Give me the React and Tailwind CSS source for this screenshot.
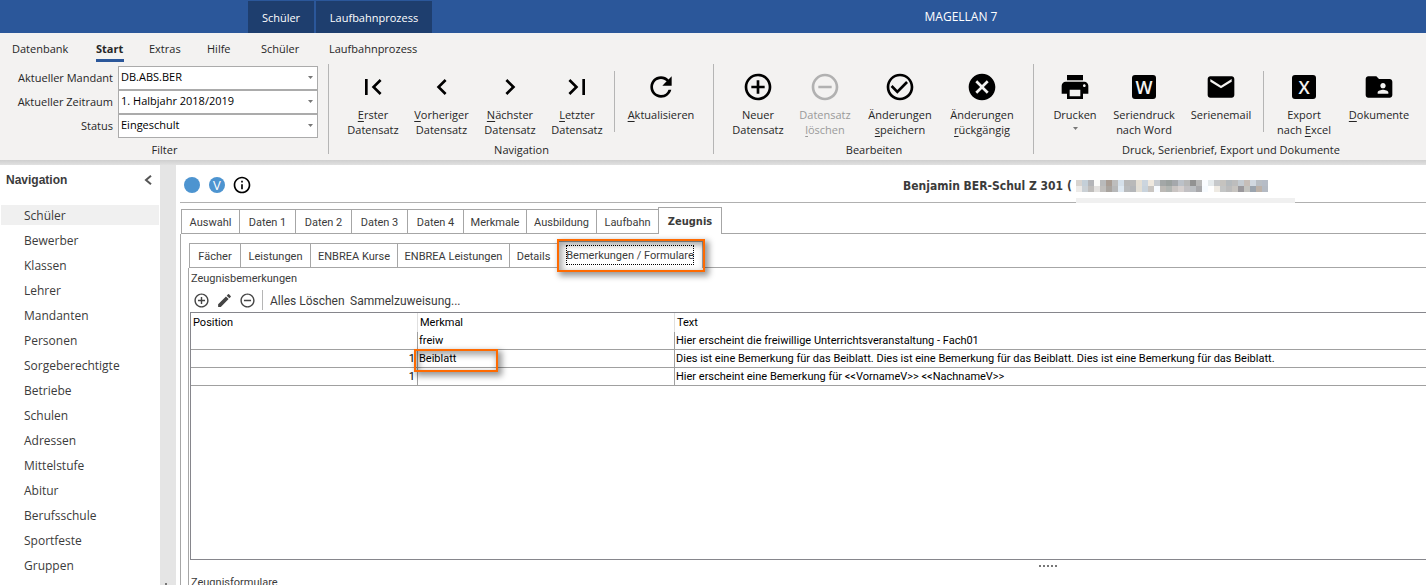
import React from "react";
import {
  MdFirstPage, MdChevronLeft, MdChevronRight, MdLastPage, MdRefresh,
  MdAddCircleOutline, MdRemoveCircleOutline, MdCheckCircleOutline, MdCancel,
  MdPrint, MdEmail, MdFolderShared, MdEdit, MdInfoOutline,
} from "react-icons/md";

function Mnemonic({ text, at }) {
  if (at === undefined) return text;
  return (
    <>
      {text.slice(0, at)}
      <span className="underline underline-offset-2">{text[at]}</span>
      {text.slice(at + 1)}
    </>
  );
}

function Letter({ children }) {
  return (
    <span className="flex size-6 items-center justify-center rounded-[3px] bg-black font-['Open_Sans',sans-serif] text-[18px] leading-6 font-semibold text-[#f3f2f1]">
      {children}
    </span>
  );
}

function RibbonButton({ width, icon, lines, disabled, arrow }) {
  return (
    <button
      type="button"
      disabled={disabled}
      className={`flex flex-col items-center pt-[7px] ${width} ${disabled ? "text-[#9a9a9a]" : "text-[#262626]"}`}
    >
      <span className={`flex size-8 items-center justify-center ${disabled ? "text-[#b1b1b1]" : "text-black"}`}>{icon}</span>
      <span className="mt-1 flex flex-col items-center leading-[15px] whitespace-nowrap">
        {lines.map(([text, at]) => (
          <span key={text}><Mnemonic text={text} at={at} /></span>
        ))}
      </span>
      {arrow && <Arrow className="mt-[5px]" />}
    </button>
  );
}

function Arrow({ className }) {
  return (
    <svg viewBox="0 0 5 3" className={`h-[3px] w-[5px] fill-[#777] ${className}`} aria-hidden="true">
      <path d="M0 0h5L2.5 3z" />
    </svg>
  );
}

function Separator() {
  return <div className="mt-[7px] h-[61px] w-px shrink-0 bg-[#b5b5b5]" />;
}

function Group({ label, className, inset = "", children }) {
  return (
    <section className={`flex h-[90px] shrink-0 flex-col border-r border-[#b5b5b5] ${className}`} aria-label={label}>
      <div className={`flex h-[78px] shrink-0 items-start ${inset}`}>{children}</div>
      <div className="-mr-px shrink-0 text-center leading-4 text-[#262626]">{label}</div>
    </section>
  );
}

const filters = [
  ["mandant", "Aktueller Mandant", "DB.ABS.BER"],
  ["zeitraum", "Aktueller Zeitraum", "1. Halbjahr 2018/2019"],
  ["status", "Status", "Eingeschult"],
];

function Ribbon() {
  const icon = "size-8";
  return (
    <div className="flex h-[98px] items-start overflow-hidden bg-[#f3f2f1] pt-[2px] text-[11px]">
      <Group label="Filter" className="w-[329px]">
        <div className="flex w-full flex-col pt-[2px]">
          {filters.map(([id, label, value]) => (
            <div key={id} className="flex h-6 items-center">
              <label htmlFor={id} className="w-[113px] shrink-0 text-right whitespace-nowrap text-[#262626]">{label}</label>
              <div className="relative ml-[5px] w-[200px]">
                <select id={id} className="block h-6 w-full appearance-none border border-[#ababab] bg-white pb-[2px] pl-[2px] text-black">
                  <option>{value}</option>
                </select>
                <Arrow className="pointer-events-none absolute top-[10px] right-[5px]" />
              </div>
            </div>
          ))}
        </div>
      </Group>
      <Group label="Navigation" className="w-[385px]" inset="pl-[10px]">
        <RibbonButton width="w-[68px]" icon={<MdFirstPage className={icon} />} lines={[["Erster", 0], ["Datensatz"]]} />
        <RibbonButton width="w-[69px]" icon={<MdChevronLeft className={icon} />} lines={[["Vorheriger", 0], ["Datensatz"]]} />
        <RibbonButton width="w-[68px]" icon={<MdChevronRight className={icon} />} lines={[["Nächster", 0], ["Datensatz"]]} />
        <RibbonButton width="w-[66px]" icon={<MdLastPage className={icon} />} lines={[["Letzter", 0], ["Datensatz"]]} />
        <div className="ml-1"><Separator /></div>
        <RibbonButton width="w-[92px]" icon={<MdRefresh className={icon} />} lines={[["Aktualisieren", 0]]} />
      </Group>
      <Group label="Bearbeiten" className="w-[320px]" inset="pl-[10px]">
        <RibbonButton width="w-[68px]" icon={<MdAddCircleOutline className={icon} />} lines={[["Neuer"], ["Datensatz"]]} />
        <RibbonButton width="w-[66px]" disabled icon={<MdRemoveCircleOutline className={icon} />} lines={[["Datensatz"], ["löschen", 0]]} />
        <RibbonButton width="w-[84px]" icon={<MdCheckCircleOutline className={icon} />} lines={[["Änderungen"], ["speichern", 0]]} />
        <RibbonButton width="w-[80px]" icon={<MdCancel className={icon} />} lines={[["Änderungen"], ["rückgängig", 0]]} />
      </Group>
      <Group label="Druck, Serienbrief, Export und Dokumente" className="w-[394px]" inset="pl-[7px]">
        <RibbonButton width="w-[68px]" arrow icon={<MdPrint className={icon} />} lines={[["Drucken"]]} />
        <RibbonButton width="w-[70px]" icon={<Letter>W</Letter>} lines={[["Seriendruck"], ["nach Word"]]} />
        <RibbonButton width="w-[84px]" icon={<MdEmail className={icon} />} lines={[["Serienemail"]]} />
        <Separator />
        <RibbonButton width="w-[80px]" icon={<Letter>X</Letter>} lines={[["Export"], ["nach Excel", 5]]} />
        <RibbonButton width="w-[70px]" icon={<MdFolderShared className={icon} />} lines={[["Dokumente", 0]]} />
      </Group>
    </div>
  );
}

function TitleBar() {
  return (
    <header className="flex h-[33px] bg-[#2b579a] pt-px text-[11px] leading-[34px] text-white">
      <div className="ml-[248px] w-[66px] bg-[#1e3e6e] text-center">Schüler</div>
      <div className="ml-[2px] w-[116px] bg-[#1e3e6e] text-center">Laufbahnprozess</div>
      <h1 className="flex-1 pl-16 text-center text-xs leading-8">MAGELLAN 7</h1>
    </header>
  );
}

function MenuBar() {
  const item = "shrink-0 text-left leading-8 whitespace-nowrap";
  return (
    <nav className="flex h-[29px] bg-[#f3f2f1] pl-3 text-[11px] text-[#262626]">
      <button type="button" className={`${item} w-[84px]`}>Datenbank</button>
      <button type="button" className={`${item} w-[53px] font-bold`}>
        <span className="inline-block h-[29px] w-7 border-b-[3px] border-[#2b579a] leading-8">Start</span>
      </button>
      <button type="button" className={`${item} w-[58px]`}>Extras</button>
      <button type="button" className={`${item} w-[54px]`}>Hilfe</button>
      <button type="button" className={`${item} w-[68px]`}>Schüler</button>
      <button type="button" className={item}>Laufbahnprozess</button>
    </nav>
  );
}

const places = [
  "Schüler", "Bewerber", "Klassen", "Lehrer", "Mandanten", "Personen", "Sorgeberechtigte", "Betriebe",
  "Schulen", "Adressen", "Mittelstufe", "Abitur", "Berufsschule", "Sportfeste", "Gruppen",
];

function Sidebar() {
  return (
    <aside className="w-40 shrink-0 bg-white text-[#3b3b3b]">
      <div className="flex h-[30px] items-center justify-between pr-2 pl-[6px]">
        <h2 className="font-['Liberation_Sans',sans-serif] font-bold">Navigation</h2>
        <button type="button" aria-label="Navigation einklappen">
          <svg viewBox="0 0 8 10" className="h-[10px] w-2 fill-none stroke-[#555]" strokeWidth="2"><path d="M7 .8 2 5l5 4.2" /></svg>
        </button>
      </div>
      <ul className="mt-[10px] flex flex-col gap-[5px] px-px">
        {places.map((p, i) => (
          <li key={p}>
            <a href="#" className={`block h-5 pl-[23px] leading-[22px] ${i === 0 ? "bg-[#f0f0f0]" : ""}`}>{p}</a>
          </li>
        ))}
      </ul>
    </aside>
  );
}

const mosaic = [
  "#d8d4d0 #c4cfd8 #b4b5b8 #fbfbf9 #b9babb #a99d94 #bdbdbd #d5e0ea #b8b8b8 #b9b9b9 #e5dfd4 #ccd5de #efe8de #c8ccd1 #a3a7a7 #9ba19f #a5a8ac #bcc1c8 #b8b8b8 #929292 #b8b8b8 #fafcff #e5eaec #c6c8ca #c5c3bf #b5babd #bdbdbd #c4cbd1 #c6beb8 #d1d8e0 #b9bec4 #b6bcc6".split(" "),
  "#eceae8 #cad0d5 #bfbdbb #e3e1df #c0bebc #a9a49f #b7b8b9 #dfe9f2 #b9bbbd #b4b6b9 #e3dfd6 #c9d3dc #c9c5c1 #f8fbff #bcb9b5 #b1b5b2 #c9c4c2 #d6d0cf #c2c0c3 #bbbec2 #a8a8ab #f7fbff #ffffff #eeeae3 #c3c5c5 #bcbcbc #c7c4c0 #9a989c #c3c3bf #9ba4ae #bcb1a8 #b4bac3".split(" "),
];

function MaskedText() {
  return (
    <svg viewBox="0 0 192 12" className="h-3 w-48" shapeRendering="crispEdges" aria-hidden="true">
      {mosaic.map((row, y) => row.map((c, x) => <rect key={`${x}-${y}`} x={x * 6} y={y * 6} width="6" height="6" fill={c} />))}
    </svg>
  );
}

function RecordHeader() {
  return (
    <div className="ml-1 flex h-[38px] items-start border-b border-[#b0b0b0] pt-3 pl-1">
      <div className="flex gap-[9px]">
        <span className="size-4 rounded-full bg-[#4d94d0]" />
        <span className="flex size-4 items-center justify-center rounded-full bg-[#4d94d0] text-[13px] leading-4 text-white">V</span>
        <span className="flex size-4 items-center justify-center text-black"><MdInfoOutline className="size-5 shrink-0" /></span>
      </div>
      <div className="flex flex-1 pl-[653px]">
        <h2 className="w-[173px] shrink-0 font-['DejaVu_Sans_Condensed','DejaVu_Sans',sans-serif] leading-[18px] font-bold whitespace-nowrap text-[#3b3b3b]">Benjamin BER-Schul Z 301 (</h2>
        <div className="pt-[3px]">
          <MaskedText />
          <div className="mt-[6px] h-[5px] w-[219px] bg-[#f0f0f0]" />
        </div>
      </div>
    </div>
  );
}

const outerTabs = [
  ["Auswahl", "w-[58px]"], ["Daten 1", "w-14"], ["Daten 2", "w-14"], ["Daten 3", "w-14"], ["Daten 4", "w-14"],
  ["Merkmale", "w-[63px]"], ["Ausbildung", "w-[70px]"], ["Laufbahn", "w-[62px]"],
];
const innerTabs = [
  ["Fächer", "w-[51px]"], ["Leistungen", "w-[70px]"], ["ENBREA Kurse", "w-[87px]"],
  ["ENBREA Leistungen", "w-[112px]"], ["Details", "w-12"],
];

function Tabs({ items, children }) {
  return (
    <div role="tablist" className="flex h-[27px] items-end pl-px">
      {items.map(([name, width]) => (
        <button
          key={name}
          role="tab"
          type="button"
          className={`h-[25px] shrink-0 border-t border-b border-l border-[#a6a6a6] pt-[3px] leading-5 whitespace-nowrap ${width}`}
        >
          {name}
        </button>
      ))}
      {children}
      <div className="h-px flex-1 bg-[#a6a6a6]" />
    </div>
  );
}

const rows = [
  ["", "freiw", "Hier erscheint die freiwillige Unterrichtsveranstaltung - Fach01"],
  ["1", "Beiblatt", "Dies ist eine Bemerkung für das Beiblatt. Dies ist eine Bemerkung für das Beiblatt. Dies ist eine Bemerkung für das Beiblatt."],
  ["1", "", "Hier erscheint eine Bemerkung für <<VornameV>> <<NachnameV>>"],
];

function Callout({ className }) {
  return (
    <span
      className={`pointer-events-none absolute z-10 border-2 border-[#ff6a00] shadow-[3px_3px_6px_1px_rgba(0,0,0,0.4),inset_2px_3px_6px_1px_rgba(0,0,0,0.35)] ${className}`}
      aria-hidden="true"
    />
  );
}

function Remarks() {
  const cell = "h-[18px] border-b border-[#a0a0a0] p-0 leading-[17px] whitespace-nowrap";
  const head = "p-0 pl-[2px] leading-[19px] font-normal";
  return (
    <div className="h-[248px] border border-r-0 border-[#86868c] text-black">
      <table className="w-full table-fixed border-separate border-spacing-0 text-left">
        <colgroup>
          <col className="w-[226px]" />
          <col className="w-[257px]" />
          <col />
        </colgroup>
        <thead>
          <tr>
            <th className={`${head} h-[19px]`}>Position</th>
            <th className={`${head} border-l border-[#e0e0e0]`}>Merkmal</th>
            <th className={`${head} border-l border-[#e0e0e0]`}>Text</th>
          </tr>
        </thead>
        <tbody>
          {rows.map(([pos, mark, text], i) => (
            <tr key={i}>
              <td className={`${cell} pr-[2px] text-right`}>{pos}</td>
              <td className={`${cell} relative border-l pl-px`}>
                {mark}
                {i === 1 && <Callout className="-top-px -left-1 h-[23px] w-[84px]" />}
              </td>
              <td className={`${cell} border-l pl-px`}>{text}</td>
            </tr>
          ))}
        </tbody>
      </table>
    </div>
  );
}

function Workspace() {
  return (
    <main className="min-w-0 flex-1 bg-white">
      <RecordHeader />
      <div className="ml-1 pt-1 font-[Roboto,sans-serif] text-[11px] text-[#3b3b3b]">
        <Tabs items={outerTabs}>
          <button role="tab" aria-selected="true" type="button" className="h-[27px] w-16 shrink-0 border-x border-t border-[#a6a6a6] pt-[2px] font-['DejaVu_Sans_Condensed','DejaVu_Sans',sans-serif] leading-5 font-bold">
            Zeugnis
          </button>
        </Tabs>
        <div className="border-l border-[#a6a6a6] pt-[7px] pl-[7px]">
          <Tabs items={innerTabs}>
            <button role="tab" aria-selected="true" type="button" className="relative h-[27px] w-[146px] shrink-0 border-x border-t border-[#a6a6a6] leading-5 whitespace-nowrap">
              <span className="mx-auto flex h-5 w-[128px] items-center justify-center border border-dotted border-black pt-[2px]">Bemerkungen / Formulare</span>
              <Callout className="-top-[3px] -left-px h-[33px] w-[148px]" />
            </button>
          </Tabs>
          <div className="border-l border-[#a6a6a6] pl-px">
            <div className="pt-[2px] pl-px leading-[18px]">Zeugnisbemerkungen</div>
            <div className="flex h-6 items-center pl-[3px] text-xs">
              <div className="flex gap-[6px] pr-[6px] text-[#444]">
                <button type="button" aria-label="Hinzufügen"><MdAddCircleOutline className="size-[17px]" /></button>
                <button type="button" aria-label="Bearbeiten"><MdEdit className="size-[17px]" /></button>
                <button type="button" aria-label="Entfernen"><MdRemoveCircleOutline className="size-[17px]" /></button>
              </div>
              <div className="h-5 w-px bg-[#b5b5b5]" />
              <button type="button" className="w-20 pt-px pl-[7px] text-left whitespace-nowrap">Alles Löschen</button>
              <button type="button" className="pt-px pl-[7px]">Sammelzuweisung...</button>
            </div>
            <Remarks />
            <div className="ml-[849px] flex gap-[2px] pt-[5px]">
              {[0, 1, 2, 3, 4].map((n) => <span key={n} className="size-[2px] bg-[#777]" />)}
            </div>
            <div className="pt-[7px] pl-px leading-[18px]">Zeugnisformulare</div>
          </div>
        </div>
      </div>
    </main>
  );
}

export default function App() {
  return (
    <div className="flex h-screen flex-col overflow-hidden bg-[#e5e5e5] font-['Open_Sans',sans-serif] text-xs">
      <TitleBar />
      <MenuBar />
      <Ribbon />
      <div className="h-[5px] shrink-0 bg-linear-to-b from-[#cfcfcf] to-[#e1e1e1]" />
      <div className="flex min-h-0 flex-1">
        <Sidebar />
        <div className="flex w-4 shrink-0 items-end pl-[5px]"><span className="size-[2px] bg-[#777]" /></div>
        <Workspace />
      </div>
    </div>
  );
}
